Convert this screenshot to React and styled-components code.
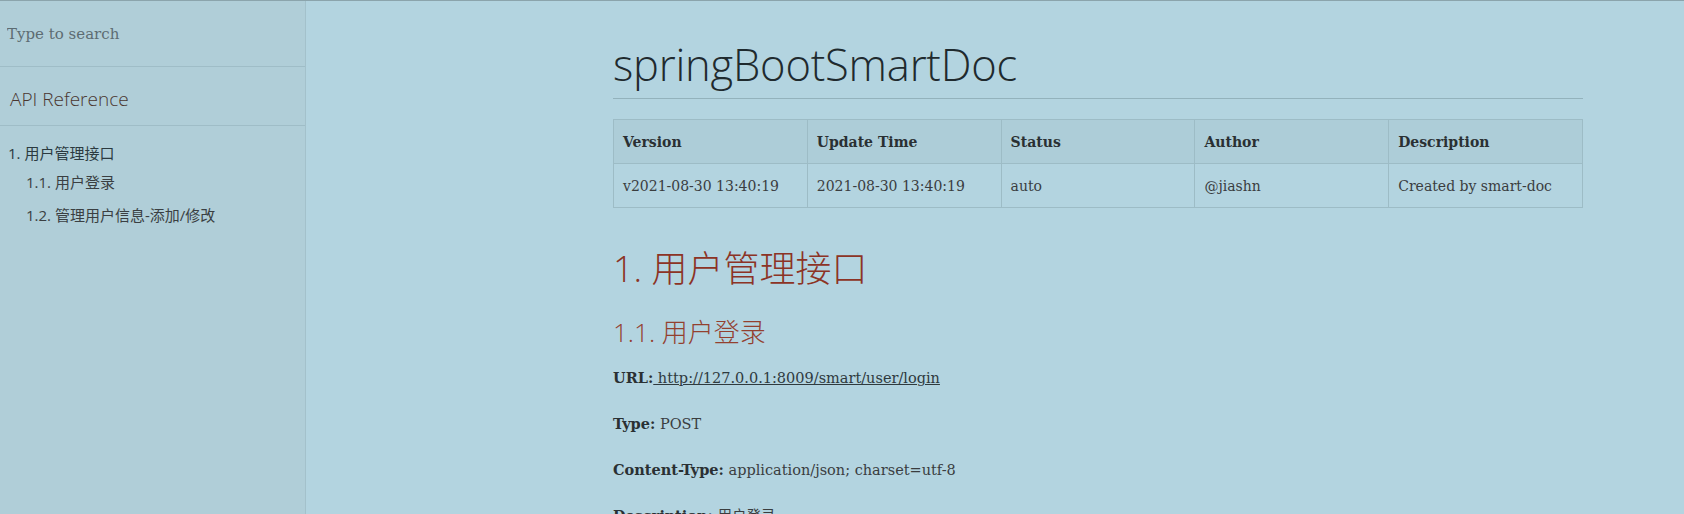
import React from "react";
import styled, { createGlobalStyle } from "styled-components";

const Global = createGlobalStyle`
  html, body { margin: 0; padding: 0; }
  body {
    background: #b3d4e0;
    font-family: "DejaVu Serif", "Noto Sans CJK SC", serif;
    color: #333;
    overflow: hidden;
  }
  * { box-sizing: border-box; }
`;

const Page = styled.div`
  display: flex;
  height: 514px;
  border-top: 1px solid #8ba4ac;
  overflow: hidden;
`;

const Sidebar = styled.aside`
  width: 306px;
  flex: none;
  background: #b0ced8;
  border-right: 1px solid #a3c1cb;
  display: flex;
  flex-direction: column;
`;

const SearchBox = styled.div`
  height: 66px;
  border-bottom: 1px solid #9fbdc7;
  display: flex;
  align-items: center;
  padding: 0 7px;
`;

const SearchInput = styled.input`
  width: 100%;
  background: transparent;
  border: none;
  outline: none;
  font-family: "DejaVu Serif", serif;
  font-size: 15px;
  color: #5d6c72;
  padding: 0;
  margin-top: 1px;
  &::placeholder { color: #5d6c72; opacity: 1; }
`;

const SideTitle = styled.div`
  height: 59px;
  border-bottom: 1px solid #9fbdc7;
  padding: 19px 0 0 10px;
  font-family: "Open Sans", sans-serif;
  font-weight: 300;
  font-size: 19px;
  line-height: 26px;
  color: #4a3630;
`;

const NavList = styled.ul`
  list-style: none;
  margin: 0;
  padding: 16px 0 0 0;
`;

const NavItem = styled.li`
  font-family: "Open Sans", "Noto Sans CJK SC", sans-serif;
  font-size: 15px;
  line-height: 22px;
  color: ${(p) => (p.$level === 1 ? "#2b3a40" : "#3a3f42")};
  padding-left: ${(p) => (p.$level === 1 ? 8 : 26)}px;
  margin-bottom: ${(p) => (p.$level === 1 ? 7 : 11)}px;
  white-space: nowrap;
`;

const Main = styled.main`
  flex: 1;
  padding: 42px 101px 0 307px;
  min-width: 0;
`;

const Title = styled.h1`
  margin: 0;
  font-family: "Open Sans", sans-serif;
  font-weight: 300;
  font-size: 43.5px;
  line-height: 44px;
  color: #1f2a2e;
  padding-bottom: 11px;
  border-bottom: 1px solid #93b2bc;
  letter-spacing: -0.2px;
`;

const Table = styled.table`
  width: 100%;
  margin-top: 20px;
  border-collapse: collapse;
  table-layout: fixed;
  font-family: "DejaVu Serif", serif;
  font-size: 14px;
`;

const Th = styled.th`
  height: 44px;
  text-align: left;
  padding: 0 9px;
  background: #adcdd8;
  border: 1px solid #9dbcc6;
  font-weight: bold;
  color: #2a3033;
`;

const Td = styled.td`
  height: 44px;
  padding: 0 9px;
  border: 1px solid #9dbcc6;
  color: #3a3d3f;
  white-space: nowrap;
`;

const H2 = styled.h2`
  margin: 39px 0 0 0;
  font-family: "Open Sans", "Noto Sans CJK SC", sans-serif;
  font-weight: 300;
  font-size: 36px;
  line-height: 43px;
  color: #8c3325;
`;

const H3 = styled.h3`
  margin: 27px 0 0 0;
  font-family: "Open Sans", "Noto Sans CJK SC", sans-serif;
  font-weight: 300;
  font-size: 26px;
  line-height: 31px;
  color: #93402f;
`;

const P = styled.p`
  margin: ${(p) => (p.$first ? 18 : 22)}px 0 0 0;
  font-family: "DejaVu Serif", "Noto Sans CJK SC", serif;
  font-size: 14.5px;
  line-height: 24px;
  color: #3a3d3f;
  white-space: nowrap;
`;

const B = styled.strong`
  color: #2a3033;
`;

const Link = styled.a`
  color: #2f3a3e;
  text-decoration: underline;
`;

const cols = ["Version", "Update Time", "Status", "Author", "Description"];
const row = ["v2021-08-30 13:40:19", "2021-08-30 13:40:19", "auto", "@jiashn", "Created by smart-doc"];

export default function App() {
  return (
    <>
      <Global />
      <Page>
        <Sidebar>
          <SearchBox>
            <SearchInput placeholder="Type to search" />
          </SearchBox>
          <SideTitle>API Reference</SideTitle>
          <NavList>
            <NavItem $level={1}>1. 用户管理接口</NavItem>
            <NavItem $level={2}>1.1. 用户登录</NavItem>
            <NavItem $level={2}>1.2. 管理用户信息-添加/修改</NavItem>
          </NavList>
        </Sidebar>
        <Main>
          <Title>springBootSmartDoc</Title>
          <Table>
            <thead>
              <tr>
                {cols.map((c) => (
                  <Th key={c}>{c}</Th>
                ))}
              </tr>
            </thead>
            <tbody>
              <tr>
                {row.map((c) => (
                  <Td key={c}>{c}</Td>
                ))}
              </tr>
            </tbody>
          </Table>
          <H2>1. 用户管理接口</H2>
          <H3>1.1. 用户登录</H3>
          <P $first>
            <B>URL:</B>
            <Link href="#"> http://127.0.0.1:8009/smart/user/login</Link>
          </P>
          <P>
            <B>Type:</B> POST
          </P>
          <P>
            <B>Content-Type:</B> application/json; charset=utf-8
          </P>
          <P>
            <B>Description:</B> 用户登录
          </P>
        </Main>
      </Page>
    </>
  );
}
